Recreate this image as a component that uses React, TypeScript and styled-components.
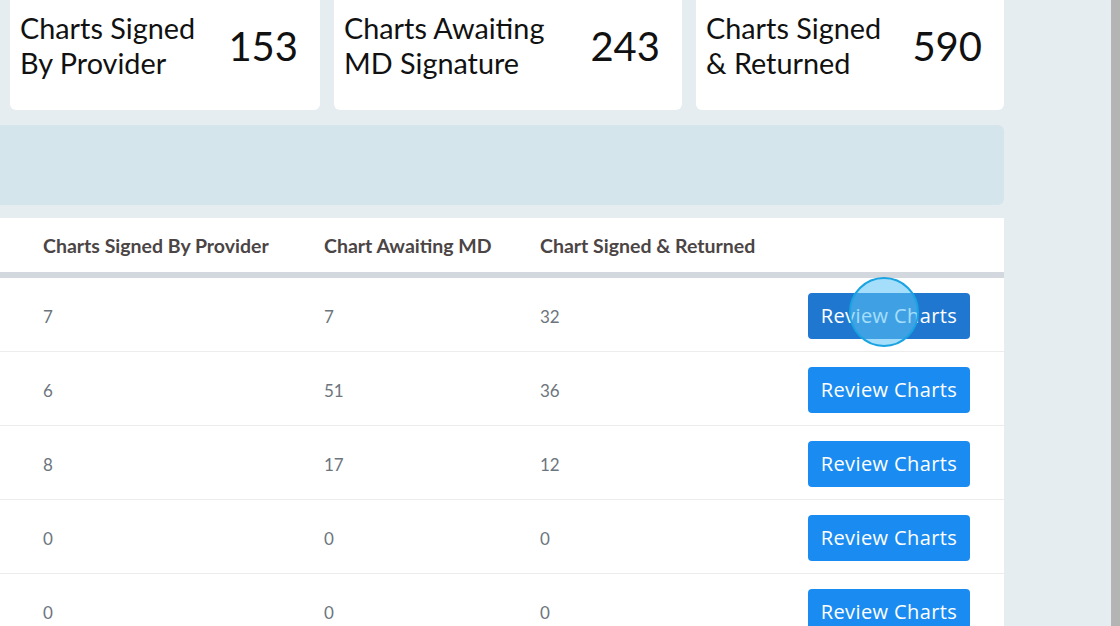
import React from "react";
import styled, { createGlobalStyle } from "styled-components";

const GlobalStyle = createGlobalStyle`
  html, body {
    margin: 0;
    padding: 0;
    background: #e6edf1;
    font-family: Lato, "Noto Sans", sans-serif;
  }
`;

const components = {
  Page: styled.div`
    display: flex;
    height: 626px;
    overflow: hidden;
  `,
  Main: styled.main`
    width: 1004px;
    flex-shrink: 0;
  `,
  Spacer: styled.div`
    flex: 1;
  `,
  ScrollBar: styled.div`
    width: 9px;
    background: #b4b4b4;
  `,
  Cards: styled.div`
    display: grid;
    grid-template-columns: 310px 348px 308px;
    gap: 14px;
    padding-left: 10px;
  `,
  Card: styled.div`
    height: 110px;
    box-sizing: border-box;
    background: #fff;
    border-radius: 0 0 6px 6px;
    display: flex;
    align-items: center;
    justify-content: space-between;
    padding: 0 22px 18px 10px;
    color: #111;
  `,
  CardTitle: styled.div`
    font-size: 28.8px;
    line-height: 35px;
  `,
  CardValue: styled.div`
    font-size: 40px;
    line-height: 1;
  `,
  FilterBand: styled.div`
    height: 80px;
    margin-top: 15px;
    background: #d5e5ec;
    border-radius: 0 6px 6px 0;
  `,
  Table: styled.div`
    margin-top: 13px;
    background: #fff;
  `,
  Row: styled.div<{ $head?: boolean }>`
    display: grid;
    box-sizing: border-box;
    grid-template-columns: 281px 216px 268px 162px;
    padding: ${p => (p.$head ? "0 0 0 43px" : "3px 0 0 43px")};
    align-items: center;
    height: ${p => (p.$head ? "60px" : "74px")};
    border-bottom: ${p => (p.$head ? "6px solid #d3d7de" : "1px solid #ececec")};
  `,
  HeadCell: styled.div`
    font-weight: 700;
    font-size: 19.5px;
    color: #4b4545;
  `,
  Cell: styled.div`
    font-size: 17px;
    color: #6c757d;
  `,
  ButtonWrap: styled.div`
    position: relative;
    height: 46px;
  `,
  ReviewButton: styled.button<{ $hover?: boolean }>`
    width: 162px;
    height: 46px;
    border: none;
    border-radius: 4px;
    background: ${p => (p.$hover ? "#1f77cf" : "#1a8cf1")};
    color: #fff;
    font-family: "Open Sans", sans-serif;
    font-size: 20px;
    letter-spacing: 0.4px;
    padding: 0 0 2px;
    cursor: pointer;
  `,
  ClickMark: styled.span`
    position: absolute;
    left: 41px;
    top: -16px;
    width: 66px;
    height: 66px;
    border-radius: 50%;
    border: 2px solid #1aa3e2;
    background: rgba(90, 195, 245, 0.55);
    pointer-events: none;
  `
};

const stats = [
  { title: ["Charts Signed", "By Provider"], value: 153 },
  { title: ["Charts Awaiting", "MD Signature"], value: 243 },
  { title: ["Charts Signed", "& Returned"], value: 590 }
];

const rows = [
  [7, 7, 32],
  [6, 51, 36],
  [8, 17, 12],
  [0, 0, 0],
  [0, 0, 0]
];

export default function App() {
  return (
    <>
      <GlobalStyle />
      <components.Page>
        <components.Main>
          <components.Cards>
            {stats.map(s => (
              <components.Card key={s.value}>
                <components.CardTitle>
                  {s.title[0]}
                  <br />
                  {s.title[1]}
                </components.CardTitle>
                <components.CardValue>{s.value}</components.CardValue>
              </components.Card>
            ))}
          </components.Cards>
          <components.FilterBand />
          <components.Table>
            <components.Row $head>
              <components.HeadCell>Charts Signed By Provider</components.HeadCell>
              <components.HeadCell>Chart Awaiting MD</components.HeadCell>
              <components.HeadCell>Chart Signed &amp; Returned</components.HeadCell>
              <div />
            </components.Row>
            {rows.map((r, i) => (
              <components.Row key={i}>
                <components.Cell>{r[0]}</components.Cell>
                <components.Cell>{r[1]}</components.Cell>
                <components.Cell>{r[2]}</components.Cell>
                <components.ButtonWrap>
                  <components.ReviewButton $hover={i === 0}>Review Charts</components.ReviewButton>
                  {i === 0 && <components.ClickMark />}
                </components.ButtonWrap>
              </components.Row>
            ))}
          </components.Table>
        </components.Main>
        <components.Spacer />
        <components.ScrollBar />
      </components.Page>
    </>
  );
}
